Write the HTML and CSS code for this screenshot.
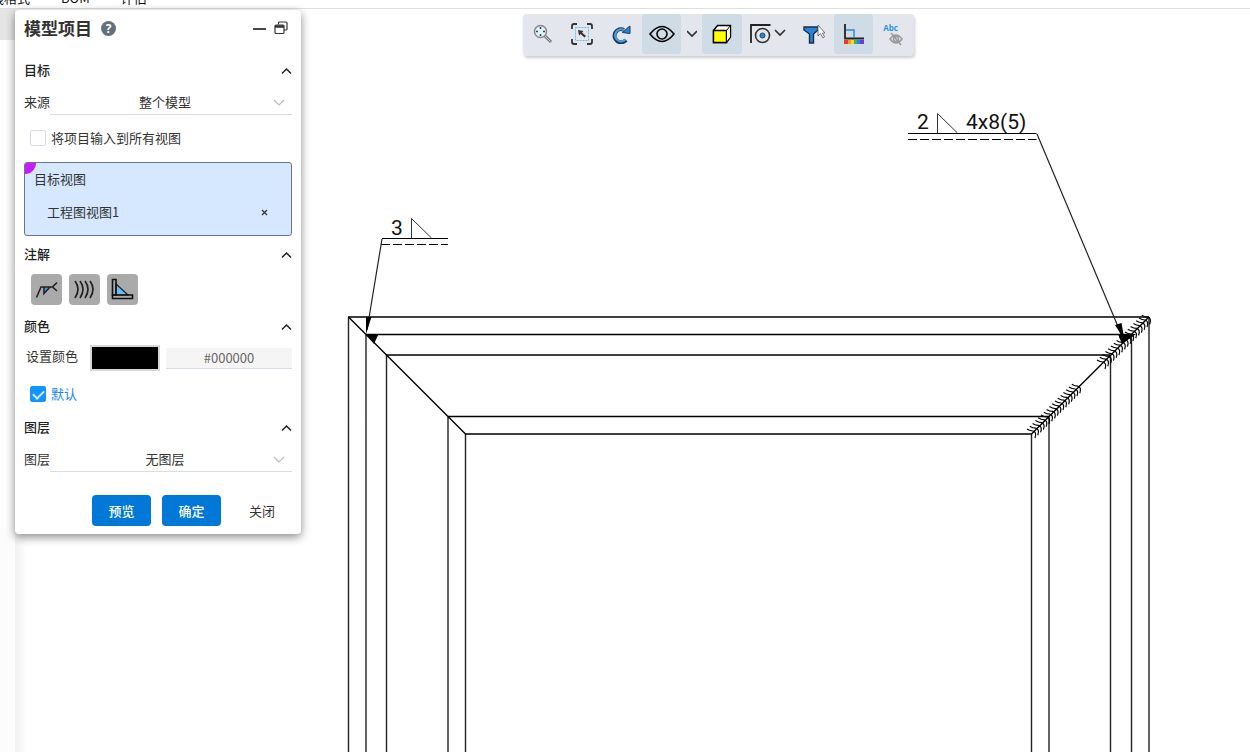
FILE: index.html
```html
<!DOCTYPE html>
<html lang="zh-CN">
<head>
<meta charset="utf-8">
<title>模型项目</title>
<link rel="stylesheet" href="styles.css">
</head>
<body>
<div class="app">
<nav class="ribbon"><a href="#format">线格式</a><a href="#bom">BOM</a><a href="#evaluate">评估</a></nav>
<main class="workspace">
  <aside class="rail"><div class="rail-tab"></div></aside>
  <section class="canvas">
    <svg class="drawing" aria-label="工程图">
      <g transform="translate(-15 -9)" fill="none" stroke="#000" stroke-width="1.4">
        <path stroke="#222" d="M348.500 2000V317M1149 317V2000M366 2000V334.500M1131.500 334.500V2000M386.500 2000V355M1110.500 355V2000M448 2000V416.500M1049 416.500V2000M465.500 2000V434M1031.500 434V2000"/>
        <path d="M348 317H1149M366 334.500H1131M386 355H1110M448 416.500H1049M465 434H1032"/>
        <path d="M348.500 317L465.500 434M1149 317L1031.500 434"/>
        <path stroke-width="1" d="M382 238.500H448M908 133.500H1036.500"/>
        <path stroke-width="1" stroke-dasharray="9 3" d="M381 244.500H448M908 139.500H1036.500"/>
        <path stroke="#333" stroke-width="1" d="M411.500 238V218.500L431.500 238M937.500 133V113.500L957.500 133"/>
        <path stroke="#222" stroke-width="1.200" d="M382 239L367 330M1037 134L1122 336"/>
        <path fill="#000" stroke="none" d="M366 334L366 317L371.500 317ZM366 334H378.500L374 344ZM1124.500 340L1115 325L1121.500 323ZM1118 334H1136L1122 344Z"/>
        <g id="weld-beads" stroke-width="1.200"></g>
        <g class="dimension" fill="#111" stroke="none"><text x="391" y="235">3</text><text x="917" y="129">2</text><text x="966" y="129">4x8(5)</text></g>
      </g>
    </svg>
  </section>

  <div class="toolbar" role="toolbar" aria-label="视图">
    <button class="tool" aria-label="缩放"><svg width="20" height="20"><path d="M11.500 11.500L18 18" stroke="#777" stroke-width="3"/><path d="M12 12L17.500 17.500" stroke="#ccc"/><circle cx="7.500" cy="7.500" r="6" fill="#dff2fa" stroke="#888" stroke-width="1.500"/><path d="M7.500 3V5M7.500 10V12M3 7.500H5M10 7.500H12" stroke="#345" stroke-width="1.500"/></svg></button>
    <button class="tool" aria-label="区域缩放"><svg width="22" height="22"><path d="M1 6V3Q1 1 3 1H6M16 1H19Q21 1 21 3V6M21 16V19Q21 21 19 21H16M6 21H3Q1 21 1 19V16" stroke="#333" stroke-width="1.800"/><rect x="4.500" y="4.500" width="13" height="13" stroke="#69bce6" stroke-dasharray="2 1"/><path d="M7 7L12.500 8L11 9.500L15 13L13.500 14.500L9.500 11L8 12.500Z" fill="#333"/></svg></button>
    <button class="tool" aria-label="重做"><svg width="20" height="20"><path d="M14 16A6.500 6.500 0 1 1 12 6" stroke="#173b60" stroke-width="4"/><path d="M13.500 15.500A6 6 0 1 1 12 6" stroke="#4a9cdb" stroke-width="2.200"/><path d="M10.500 8.500L16 3.500L18 2V9.500Z" fill="#2583d3" stroke="#173b60"/></svg></button>
    <button class="tool on" aria-label="显示"><svg width="26" height="18"><path d="M1 9Q13-6 25 9Q13 24 1 9Z" stroke="#000" stroke-width="1.600"/><circle cx="13" cy="9" r="5" stroke="#000" stroke-width="1.600"/></svg></button>
    <button class="tool narrow" aria-label="更多显示"><svg width="10" height="8"><path d="M0 1L5 6L10 1" stroke="#333" stroke-width="1.600"/></svg></button>
    <button class="tool on" aria-label="着色"><svg width="20" height="20"><path d="M1.500 6.500L5.500 1.500H18.500V13L14.500 18.500H1.500Z" fill="#fff" stroke="#000" stroke-width="1.400"/><path d="M1.500 6.500H14.500V18.500H1.500Z" fill="#ff0" stroke="#000" stroke-width="1.400"/><path d="M14.500 6.500L18.500 1.500V13L14.500 18.500Z" fill="#ffffc0" stroke="#000"/></svg></button>
    <button class="tool wide" aria-label="孔标注"><svg width="36" height="20"><path d="M1 19V1H20.500" stroke="#222" stroke-width="1.800"/><circle cx="12.500" cy="11.500" r="7" stroke="#333" stroke-width="1.600"/><circle cx="12.500" cy="11.500" r="2.500" fill="#2686db" stroke="#245"/><path d="M25 6L30 11L35 6" stroke="#333" stroke-width="1.700"/></svg></button>
    <button class="tool" aria-label="过滤"><svg width="22" height="22"><path d="M1 4H15V7L10.500 11V20H6.500V11L1 7Z" fill="#2b83d1" stroke="#182f48" stroke-width="1.400"/><path d="M15 2V13L17.500 10.500L20 15L21.500 14L19.500 10H22Z" fill="#fff" stroke="#555" stroke-width=".8"/></svg></button>
    <button class="tool on" aria-label="颜色"><svg width="22" height="22"><path d="M2 1V15.500H21" stroke="#222" stroke-width="1.800"/><path d="M3 7H11V15" stroke="#3187dc" stroke-width="1.500"/><path d="M1 17H5V21H1Z" fill="#e33"/><path d="M5 17H8V21H5Z" fill="#f92"/><path d="M8 17H11V21H8Z" fill="#ed2"/><path d="M11 17H14V21H11Z" fill="#3b5"/><path d="M14 17H17V21H14Z" fill="#28d"/><path d="M17 17H21V21H17Z" fill="#73d"/></svg></button>
    <button class="tool last" aria-label="隐藏文字"><span>Abc</span><svg width="14" height="14"><path d="M1 7Q7-1 13 7Q7 15 1 7Z" stroke="#999" stroke-width="1.500"/><circle cx="7" cy="7" r="2.500" stroke="#999" stroke-width="1.500"/><path d="M2 1L12 13" stroke="#999" stroke-width="1.500"/></svg></button>
  </div>

  <form class="panel">
    <header class="title-row">
      <h1>模型项目</h1>
      <button type="button" class="plain help" aria-label="帮助">?</button>
      <button type="button" class="plain minimize" aria-label="最小化"><svg width="13" height="14"><path d="M0 8H13" stroke="#333" stroke-width="1.800"/></svg></button>
      <button type="button" class="plain" aria-label="还原"><svg width="14" height="14"><path d="M4.500 3.500V2Q4.500 1 5.500 1H12Q13 1 13 2V8Q13 9 12 9H10" stroke="#333" stroke-width="1.200"/><rect x="1" y="4" width="9" height="8.500" rx="1" stroke="#333" stroke-width="1.200"/><path d="M1 5.500H10" stroke="#333" stroke-width="2.500"/></svg></button>
    </header>

    <div class="section-head"><h2>目标</h2><button type="button" class="plain" aria-label="折叠目标"><svg width="11" height="8"><path d="M1 6.500L5.500 2L10 6.500" stroke="#222" stroke-width="1.500"/></svg></button></div>
    <div class="field"><label for="source">来源</label><select id="source"><option>整个模型</option></select><svg class="arrow" width="12" height="8"><path d="M1 1L6 6L11 1" stroke="#b9bec4" stroke-width="1.200"/></svg></div>
    <label class="check"><input type="checkbox">将项目输入到所有视图</label>
    <div class="target">
      <span class="swatch-corner"></span>
      <div>目标视图</div>
      <div class="target-item"><span>工程图视图1</span><button type="button" class="plain" aria-label="移除"><svg width="7" height="7"><path d="M1 1L6 6M6 1L1 6" stroke="#333" stroke-width="1.200"/></svg></button></div>
    </div>

    <div class="section-head"><h2>注解</h2><button type="button" class="plain" aria-label="折叠注解"><svg width="11" height="8"><path d="M1 6.500L5.500 2L10 6.500" stroke="#222" stroke-width="1.500"/></svg></button></div>
    <div class="notes">
      <button type="button" aria-label="焊接符号"><svg width="23" height="23"><path d="M9 9H15.500L9.500 15.500Z" fill="#36a1ef"/><path d="M1.500 19.500L6 9H17.500M9 9V15.500L15 9M22 4.500L17.500 9L22 13" stroke="#222" stroke-width="1.600"/></svg></button>
      <button type="button" aria-label="毛虫焊缝"><svg width="23" height="23"><path d="M2 3Q8 11 2 20M7 3Q13 11 7 20M12 3Q18 11 12 20M17 3Q23 11 17 20" stroke="#222" stroke-width="1.700"/></svg></button>
      <button type="button" aria-label="端点焊缝"><svg width="23" height="23"><path d="M5 6L17 17H5Z" fill="#67bdf2" stroke="#222" stroke-width="1.200"/><path d="M1.500 1.500H5V17H1.500Z" stroke="#111" stroke-width="1.600"/><path d="M1.500 17H21.500V20.500H1.500Z" stroke="#111" stroke-width="1.600"/></svg></button>
    </div>

    <div class="section-head"><h2>颜色</h2><button type="button" class="plain" aria-label="折叠颜色"><svg width="11" height="8"><path d="M1 6.500L5.500 2L10 6.500" stroke="#222" stroke-width="1.500"/></svg></button></div>
    <div class="color-row"><label for="color">设置颜色</label><input id="color" type="color" value="#000000"><input class="hex" type="text" value="#000000" aria-label="颜色值"></div>
    <label class="check default"><input type="checkbox" checked>默认</label>

    <div class="section-head"><h2>图层</h2><button type="button" class="plain" aria-label="折叠图层"><svg width="11" height="8"><path d="M1 6.500L5.500 2L10 6.500" stroke="#222" stroke-width="1.500"/></svg></button></div>
    <div class="field"><label for="layer">图层</label><select id="layer"><option>无图层</option></select><svg class="arrow" width="12" height="8"><path d="M1 1L6 6L11 1" stroke="#b9bec4" stroke-width="1.200"/></svg></div>
    <footer class="actions"><button type="button" class="primary">预览</button><button type="button" class="primary">确定</button><button type="button" class="close">关闭</button></footer>
  </form>
</main>
</div>
<script src="drawing.js"></script>
</body>
</html>
```
FILE: styles.css
```css
* { box-sizing: border-box; }
body { margin: 0; color: #333; background: #fff; font: 13px/20px "Noto Sans CJK SC", sans-serif; }
button, input, select { font: inherit; color: inherit; margin: 0; }
button { border: 0; padding: 0; background: none; }
svg { display: block; fill: none; }
h1, h2 { margin: 0; }
.app { height: 100vh; display: flex; flex-direction: column; overflow: hidden; }
.ribbon { height: 9px; flex: none; display: flex; align-items: flex-end; gap: 31px; border-bottom: 1px solid #dedfe2; overflow: hidden; }
.ribbon a { color: #111; text-decoration: none; line-height: 20px; }
.ribbon a:first-child { margin-left: -9px; }
.workspace { flex: 1; min-height: 0; display: flex; position: relative; }
.rail { width: 15px; flex: none; background: #fcfcfc; }
.rail-tab { height: 31px; background: #e5e5e5; }
.canvas { flex: 1; min-width: 0; overflow: hidden; background: linear-gradient(90deg, #f1f1f1, #fff 12px); }
.drawing { width: 100%; height: 100%; }
.dimension { font: 400 21px Roboto, sans-serif; }

.toolbar { position: absolute; left: 523px; top: 5px; display: flex; background: #e3e6ed; border-radius: 4px; box-shadow: 1px 2px 3px #0003; padding-bottom: 2px; }
.tool { width: 39px; height: 40px; display: grid; place-items: center; border-radius: 3px; }
.tool:nth-child(2), .tool:nth-child(3), .tool:nth-child(6), .tool:nth-child(8) { width: 40px; }
.tool.on { background: #cfdce5; }
.tool.narrow { width: 21px; }
.tool.wide { width: 52px; }
.tool.last { width: 41px; place-content: center; }
.last span { font: bold 8px/9px "Open Sans", sans-serif; color: #2c95e0; margin-right: 6px; }
.last svg { margin-left: 6px; }

.panel { position: absolute; left: 15px; top: 1px; width: 286px; padding: 0 9px 8px; background: #fff; border-radius: 4px; box-shadow: 0 3px 10px #0007; }
.title-row { height: 36px; margin-bottom: 13px; display: flex; align-items: center; gap: 8px; padding-right: 4px; }
h1 { font-size: 17px; line-height: 24px; margin-right: 1px; }
.plain { display: grid; place-items: center; }
.help { width: 15px; height: 15px; border-radius: 50%; background: #66707b; color: #fff; font: bold 12px/15px "Open Sans", sans-serif; }
.minimize { margin-left: auto; }
.section-head { height: 24px; display: flex; align-items: center; justify-content: space-between; }
h2 { font-size: 13px; line-height: 20px; padding-bottom: 2px; font-weight: 500; color: #222; }
.field { position: relative; display: flex; height: 25px; margin-top: 7px; }
.field label { line-height: 24px; }
.field select { flex: 1; appearance: none; background: none; border: 0; border-bottom: 1px solid #d9dce2; border-radius: 0; padding: 0 12px 0 0; text-align-last: center; outline: 0; }
.arrow { position: absolute; right: 7px; top: 9px; pointer-events: none; }
.check { display: flex; height: 16px; align-items: center; gap: 5px; margin: 15px 0 16px 6px; }
.check input { appearance: none; width: 16px; height: 16px; border: 1px solid #d7dbe5; border-radius: 2px; display: grid; place-items: center; }
.check input:checked { background: #1494ff; border-color: #1494ff; }
.check input:checked::before { content: ""; width: 9px; height: 5px; border: solid #d5ecff; border-width: 0 0 2px 2px; transform: translateY(-1px) rotate(-45deg); }
.default { color: #1684ff; margin: 15px 0 14px 6px; }
.target { position: relative; height: 74px; padding: 6px 23px 0 9px; margin-bottom: 7px; border: 1px solid #687582; border-radius: 3px; background: #d5e8ff; overflow: hidden; }
.swatch-corner { position: absolute; left: 0; top: 0; width: 11px; height: 11px; background: #c41bff; border-radius: 0 0 11px 0; }
.target-item { display: flex; justify-content: space-between; padding-left: 13px; margin-top: 13px; }
.notes { display: flex; gap: 7px; margin: 7px 0 10px 7px; }
.notes button { width: 31px; height: 31px; border-radius: 4px; background: #aaa; display: grid; place-items: center; }
.color-row { display: flex; align-items: center; margin-top: 6px; padding-left: 2px; height: 26px; }
.color-row label { padding-bottom: 4px; }
.color-row input[type="color"] { appearance: none; width: 70px; height: 26px; border: 2px solid #d8d8d8; padding: 0; margin: 0 6px 0 12px; background: #000; }
input[type="color"]::-webkit-color-swatch-wrapper { padding: 0; }
input[type="color"]::-webkit-color-swatch { border: 0; }
.hex { flex: 1; min-width: 0; height: 21px; border: 0; border-bottom: 1px solid #d9dce5; background: #f5f5f5; color: #666; text-align: center; }
.actions { display: flex; justify-content: flex-end; gap: 11px; margin-top: 23px; }
.actions button { height: 31px; width: 59px; border-radius: 4px; }
.actions .primary { color: #fff; background: #0078d7; font-weight: 500; }
.actions .close { width: 60px; }
```
FILE: drawing.js
```javascript
const beads = document.getElementById("weld-beads");
const seams = [{ x: 1034, y: 432 }, { x: 1104, y: 363 }];
for (const seam of seams) {
  for (let i = 0; i < 17; i++) {
    const path = document.createElementNS("http://www.w3.org/2000/svg", "path");
    const x = seam.x + i * 2.8;
    const y = seam.y - i * 2.8;
    path.setAttribute("d", `M${x - 7} ${y - 3}Q${x - 4} ${y - 1} ${x - 1} ${y - 1}Q${x + 3} ${y} ${x + 1} ${y + 6}`);
    beads.append(path);
  }
}
```
